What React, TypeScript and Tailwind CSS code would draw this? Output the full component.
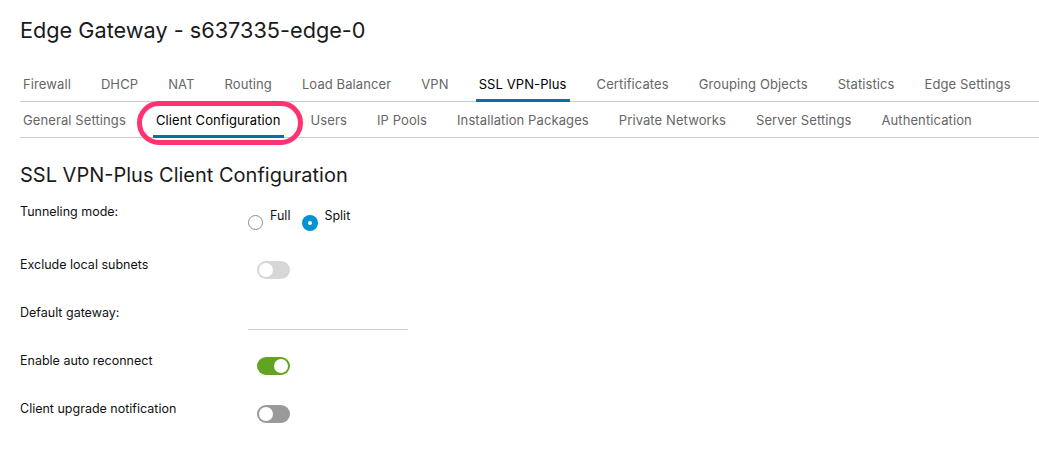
import React from "react";

const mainTabs = ["Firewall","DHCP","NAT","Routing","Load Balancer","VPN","SSL VPN-Plus","Certificates","Grouping Objects","Statistics","Edge Settings"];
const subTabs = ["General Settings","Client Configuration","Users","IP Pools","Installation Packages","Private Networks","Server Settings","Authentication"];

function Tabs({ items, active }: { items: string[]; active: string }) {
  return (
    <div className="flex h-[36px] shadow-[inset_0_-1px_0_#cccccc]">
      {items.map((t) => (
        <div
          key={t}
          className={
            "mr-[24px] px-[3px] pt-[2px] flex items-center text-[13px] tracking-[0.1px] " +
            (t === active ? "text-black shadow-[inset_0_-3px_0_#0072a3]" : "text-[#666666]")
          }
        >
          {t}
        </div>
      ))}
    </div>
  );
}

function Toggle({ kind }: { kind: "light" | "on" | "off" }) {
  const track = kind === "on" ? "bg-[#62a420]" : kind === "light" ? "bg-[#d7d7d7]" : "bg-[#9a9a9a]";
  return (
    <div className={"relative w-[33px] h-[18px] rounded-full " + track}>
      <div
        className={
          "absolute top-[2px] w-[14px] h-[14px] rounded-full bg-white " +
          (kind === "on" ? "right-[2px]" : "left-[2px]")
        }
      />
    </div>
  );
}

export default function App() {
  return (
    <div className="relative w-[1039px] h-[470px] bg-white pl-[20px] pt-[14px] font-['Inter',sans-serif] text-black overflow-hidden">
      <h1 className="text-[21.7px] leading-[32px] font-normal text-[#1a1a1a]">Edge Gateway - s637335-edge-0</h1>
      <div className="mt-[20px]">
        <Tabs items={mainTabs} active="SSL VPN-Plus" />
        <Tabs items={subTabs} active="Client Configuration" />
      </div>
      <h2 className="mt-[23px] text-[20px] leading-[28px] font-normal text-[#1a1a1a]">SSL VPN-Plus Client Configuration</h2>

      <div className="mt-[15px] text-[12.5px] leading-[16px] text-[#111111]">
        <div className="flex h-[53px]">
          <div className="w-[228px]">Tunneling mode:</div>
          <div className="flex items-start">
            <div className="mt-[11px] w-[15px] h-[15px] rounded-full border border-[#8c8c8c]" />
            <span className="ml-[7px] mt-[4px]">Full</span>
            <div className="ml-[12px] mt-[11px] w-[16px] h-[16px] rounded-full bg-[#0092d1] flex items-center justify-center">
              <div className="w-[4px] h-[4px] rounded-full bg-white" />
            </div>
            <span className="ml-[6px] mt-[4px]">Split</span>
          </div>
        </div>
        <div className="flex h-[48px]">
          <div className="w-[237px]">Exclude local subnets</div>
          <div className="mt-[4px]"><Toggle kind="light" /></div>
        </div>
        <div className="flex h-[48px]">
          <div className="w-[228px]">Default gateway:</div>
          <div className="w-[160px] h-[25px] border-b border-[#cccccc]" />
        </div>
        <div className="flex h-[48px]">
          <div className="w-[237px]">Enable auto reconnect</div>
          <div className="mt-[4px]"><Toggle kind="on" /></div>
        </div>
        <div className="flex h-[48px]">
          <div className="w-[237px]">Client upgrade notification</div>
          <div className="mt-[4px]"><Toggle kind="off" /></div>
        </div>
      </div>

      <div className="absolute left-[137px] top-[101px] w-[166px] h-[44px] rounded-[22px] border-[5px] border-[#ff3370]" />
    </div>
  );
}
